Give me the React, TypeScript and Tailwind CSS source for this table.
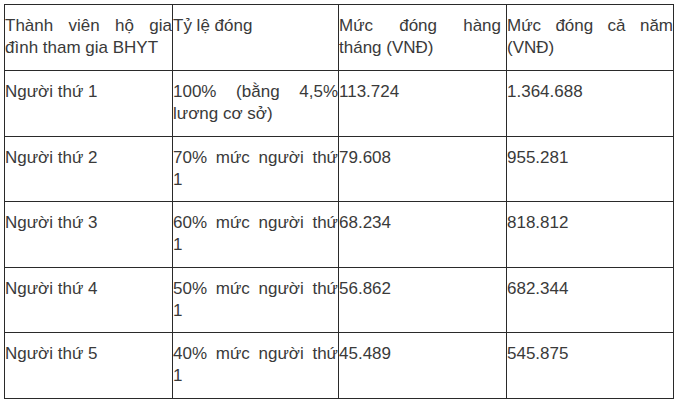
const rows = [
  ["Người thứ 1", "100% (bằng 4,5% lương cơ sở)", "113.724", "1.364.688"],
  ["Người thứ 2", "70% mức người thứ 1", "79.608", "955.281"],
  ["Người thứ 3", "60% mức người thứ 1", "68.234", "818.812"],
  ["Người thứ 4", "50% mức người thứ 1", "56.862", "682.344"],
  ["Người thứ 5", "40% mức người thứ 1", "45.489", "545.875"],
];

const cell =
  "border border-[#2a2a2a] align-top text-justify pt-[10px] pl-0 leading-[22px]";

export default function App() {
  return (
    <div className="w-[679px] h-[404px] bg-white pt-[4px] pl-[4px] font-['Liberation_Sans',Arial,sans-serif] text-[17px] text-[#3a3a3a]">
      <table className="table-fixed border-collapse w-[669px]">
        <colgroup>
          <col className="w-[168px]" />
          <col className="w-[166px]" />
          <col className="w-[168px]" />
          <col className="w-[167px]" />
        </colgroup>
        <tbody>
          <tr className="h-[66px]">
            <td className={cell + " pr-0"}>Thành viên hộ gia đình tham gia BHYT</td>
            <td className={cell + " pr-0"}>Tỷ lệ đóng</td>
            <td className={cell + " pr-[5px]"}>Mức đóng hàng tháng (VNĐ)</td>
            <td className={cell + " pr-0"}>Mức đóng cả năm (VNĐ)</td>
          </tr>
          {rows.map((r) => (
            <tr key={r[0]} className="h-[65.6px]">
              {r.map((c, i) => (
                <td key={i} className={cell + " pr-0"}>
                  {c}
                </td>
              ))}
            </tr>
          ))}
        </tbody>
      </table>
    </div>
  );
}
